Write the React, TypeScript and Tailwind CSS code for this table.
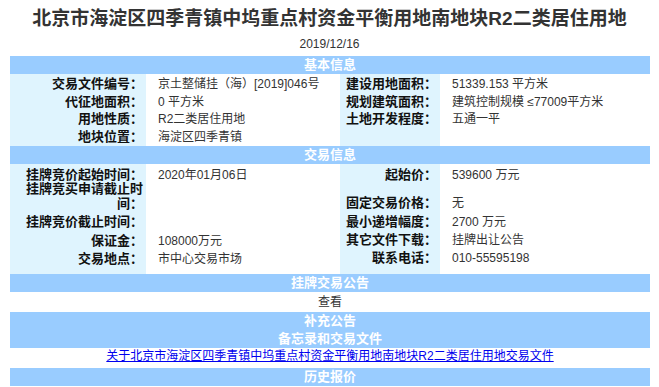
import React from "react";

type Cell = { label: React.ReactNode; value?: React.ReactNode; pt?: string };
type Row = { h: string; left: Cell; right: Cell };

const basicRows: Row[] = [
  {
    h: "h-[17.5px]",
    left: { label: "交易文件编号：", value: "京土整储挂（海）[2019]046号" },
    right: { label: "建设用地面积：", value: "51339.153 平方米" },
  },
  {
    h: "h-[17.5px]",
    left: { label: "代征地面积：", value: "0 平方米" },
    right: { label: "规划建筑面积：", value: "建筑控制规模 ≤77009平方米" },
  },
  {
    h: "h-[17.5px]",
    left: { label: "用地性质：", value: "R2二类居住用地" },
    right: { label: "土地开发程度：", value: "五通一平" },
  },
  {
    h: "h-[17.5px]",
    left: { label: "地块位置：", value: "海淀区四季青镇" },
    right: { label: "" },
  },
];

const tradeRows: Row[] = [
  {
    h: "h-[17px]",
    left: { label: "挂牌竞价起始时间：", value: "2020年01月06日", pt: "pt-[3px]" },
    right: { label: "起始价：", value: "539600 万元", pt: "pt-[3px]" },
  },
  {
    h: "h-[31px]",
    left: {
      label: (
        <span className="block leading-[15px]">
          挂牌竞买申请截止时
          <br />
          间：
        </span>
      ),
    },
    right: { label: "固定交易价格：", value: "无", pt: "pt-[14px]" },
  },
  {
    h: "h-[19px]",
    left: { label: "挂牌竞价截止时间：", pt: "pt-[2px]" },
    right: { label: "最小递增幅度：", value: "2700 万元", pt: "pt-[2px]" },
  },
  {
    h: "h-[19px]",
    left: { label: "保证金：", value: "108000万元", pt: "pt-[2px]" },
    right: { label: "其它文件下载：", value: "挂牌出让公告", pt: "pt-[1px]" },
  },
  {
    h: "h-[24px]",
    left: { label: "交易地点：", value: "市中心交易市场", pt: "pt-[1px]" },
    right: { label: "联系电话：", value: "010-55595198" },
  },
];

function Bar({ children }: { children: React.ReactNode }) {
  return (
    <div className="h-[18px] bg-[#99ccff] text-center text-[13px] font-bold leading-[18px] text-white">
      {children}
    </div>
  );
}

function InfoRow({ row }: { row: Row }) {
  const lpt = row.left.pt ?? "pt-0";
  const rpt = row.right.pt ?? "pt-0";
  return (
    <div className={`flex ${row.h}`}>
      <div className={`w-[136px] shrink-0 bg-[#dff4fe] pr-[3px] text-right text-[13px] font-bold leading-[16px] text-[#111] ${lpt}`}>
        {row.left.label}
      </div>
      <div className={`w-[194px] shrink-0 pl-3 text-[12px] leading-[16px] text-[#333] ${lpt}`}>
        {row.left.value}
      </div>
      <div className={`w-[100px] shrink-0 bg-[#dff4fe] pr-[3px] text-right text-[13px] font-bold leading-[16px] text-[#111] ${rpt}`}>
        {row.right.label}
      </div>
      <div className={`flex-1 pl-3 text-[12px] leading-[16px] text-[#333] ${rpt}`}>
        {row.right.value}
      </div>
    </div>
  );
}

export default function App() {
  return (
    <div className="h-[387px] w-[659px] overflow-hidden bg-white font-['Liberation_Sans','Noto_Sans_CJK_SC',sans-serif]">
      <h1 className="pt-[8px] text-center text-[19px] font-bold leading-[22px] text-[#333]">
        北京市海淀区四季青镇中坞重点村资金平衡用地南地块R2二类居住用地
      </h1>
      <div className="mt-[6px] text-center text-[12px] leading-[16px] text-[#333]">2019/12/16</div>

      <div className="ml-[10px] mt-[4px] w-[640px]">
        <Bar>基本信息</Bar>
        <div className="flex h-[2px]">
          <div className="w-[136px] bg-[#dff4fe]" />
          <div className="w-[194px]" />
          <div className="w-[100px] bg-[#dff4fe]" />
        </div>
        {basicRows.map((r, i) => (
          <InfoRow key={i} row={r} />
        ))}

        <Bar>交易信息</Bar>
        {tradeRows.map((r, i) => (
          <InfoRow key={i} row={r} />
        ))}

        <Bar>挂牌交易公告</Bar>
        <div className="h-[20px] text-center text-[12px] leading-[20px] text-[#333]">查看</div>
        <Bar>补充公告</Bar>
        <Bar>备忘录和交易文件</Bar>
        <div className="h-[20px] text-center text-[12px] leading-[17px]">
          <a href="#" className="text-[#0000ee] underline">
            关于北京市海淀区四季青镇中坞重点村资金平衡用地南地块R2二类居住用地交易文件
          </a>
        </div>
        <Bar>历史报价</Bar>
      </div>
    </div>
  );
}
